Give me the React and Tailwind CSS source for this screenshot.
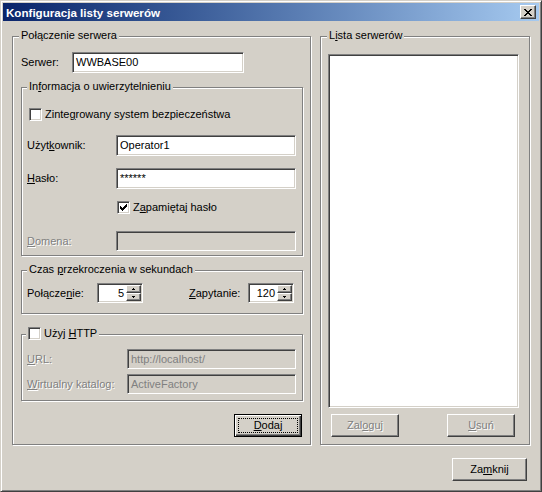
import React from 'react';

const sunken =
  'border border-t-[#808080] border-l-[#808080] border-r-white border-b-white shadow-[inset_1px_1px_0_#404040,inset_-1px_-1px_0_#d4d0c8]';
const raised =
  'border border-t-white border-l-white border-r-[#404040] border-b-[#404040] shadow-[inset_-1px_-1px_0_#808080]';
const etched = 'border border-[#808080] shadow-[inset_1px_1px_0_#fff,1px_1px_0_#fff]';
const disabledText = 'text-[#808080] [text-shadow:1px_1px_0_#fff]';

// underlined access key letter
const U = ({ children }) => <span className="underline underline-offset-1 decoration-1">{children}</span>;

function Group({ title, className, children, legendLeft = 'left-[6px]' }) {
  return (
    <div className={`relative flex flex-col shrink-0 ${etched} ${className}`}>
      <span className={`absolute top-[-8px] ${legendLeft} px-[2px] bg-[#d4d0c8] whitespace-nowrap`}>{title}</span>
      {children}
    </div>
  );
}

function Edit({ className, value, disabled, h = 'h-[21px]' }) {
  return (
    <div
      className={`${sunken} ${h} ${className} shrink-0 flex items-center pl-[3px] whitespace-nowrap overflow-hidden ${
        disabled ? 'bg-[#d4d0c8] text-[#808080]' : 'bg-white'
      }`}
    >
      {value}
    </div>
  );
}

function Check({ checked }) {
  return (
    <span className={`w-[13px] h-[13px] shrink-0 bg-white ${sunken} flex items-center justify-center`}>
      {checked && (
        <svg width="7" height="7" viewBox="0 0 7 7" shapeRendering="crispEdges">
          <path
            fill="#000"
            d="M6 0h1v1h-1z M5 1h2v1h-2z M0 2h1v1h-1z M4 2h3v1h-3z M0 3h2v1h-2z M3 3h3v1h-3z M0 4h5v1h-5z M1 5h3v1h-3z M2 6h1v1h-1z"
          />
        </svg>
      )}
    </span>
  );
}

function Spin({ value }) {
  return (
    <div className={`${sunken} w-[46px] h-[20px] shrink-0 bg-white flex`}>
      <span className="flex-1 flex items-center justify-end pr-[2px]">{value}</span>
      <div className="w-[15px] flex flex-col mt-[1px] mr-[1px] mb-[1px]">
        <span className={`flex-1 bg-[#d4d0c8] ${raised} flex items-center justify-center`}>
          <svg width="3" height="2" viewBox="0 0 3 2" shapeRendering="crispEdges">
            <path fill="#000" d="M1 0h1v1h-1z M0 1h3v1h-3z" />
          </svg>
        </span>
        <span className={`flex-1 bg-[#d4d0c8] ${raised} flex items-center justify-center`}>
          <svg width="3" height="2" viewBox="0 0 3 2" shapeRendering="crispEdges">
            <path fill="#000" d="M0 0h3v1h-3z M1 1h1v1h-1z" />
          </svg>
        </span>
      </div>
    </div>
  );
}

function Button({ className, children, disabled }) {
  return (
    <div
      className={`${raised} bg-[#d4d0c8] h-[23px] shrink-0 flex items-center justify-center ${
        disabled ? disabledText : ''
      } ${className}`}
    >
      {children}
    </div>
  );
}

export default function App() {
  return (
    <div className="w-[542px] h-[492px] bg-[#d4d0c8] font-['Liberation_Sans',Arial,sans-serif] text-[11px] leading-[13px] text-black border border-t-[#d4d0c8] border-l-[#d4d0c8] border-r-[#404040] border-b-[#404040] shadow-[inset_1px_1px_0_#fff,inset_-1px_-1px_0_#808080] p-[2px] flex flex-col select-none">
      {/* title bar */}
      <div className="h-[18px] shrink-0 flex items-center bg-linear-to-r from-[#0a246a] to-[#a6caf0] pl-[3px] pr-[3px]">
        <span className="flex-1 text-white font-bold text-[11.6px]">Konfiguracja listy serwerów</span>
        <div className={`w-[16px] h-[14px] bg-[#d4d0c8] ${raised} flex items-center justify-center`}>
          <svg width="8" height="7" viewBox="0 0 8 7" shapeRendering="crispEdges">
            <path
              fill="#000"
              d="M0 0h2v1h-2z M6 0h2v1h-2z M1 1h2v1h-2z M5 1h2v1h-2z M2 2h4v1h-4z M3 3h2v1h-2z M2 4h4v1h-4z M1 5h2v1h-2z M5 5h2v1h-2z M0 6h2v1h-2z M6 6h2v1h-2z"
            />
          </svg>
        </div>
      </div>

      <div className="flex flex-col pl-[9px]">
        <div className="flex mt-[15px]">
          {/* Połączenie serwera */}
          <Group title="Połączenie serwera" className="w-[299px] h-[409px] pl-[8px] pr-[7px]">
            <div className="flex items-center mt-[15px]">
              <span className="w-[51px]">Serwer:</span>
              <Edit className="w-[172px]" value="WWBASE00" />
            </div>

            <Group
              title={<>In<U>f</U>ormacja o uwierzytelnieniu</>}
              legendLeft="left-[5px]"
              className="w-[282px] h-[169px] mt-[14px]"
            >
              <div className="flex items-center mt-[20px] ml-[7px]">
                <Check />
                <span className="ml-[3px]">
                  Zinte<U>g</U>rowany system bezpieczeństwa
                </span>
              </div>
              <div className="flex items-center mt-[14px] ml-[5px]">
                <span className="w-[89px]">
                  Użyt<U>k</U>ownik:
                </span>
                <Edit className="w-[180px]" value="Operator1" />
              </div>
              <div className="flex items-center mt-[12px] ml-[5px]">
                <span className="w-[89px]">
                  <U>H</U>asło:
                </span>
                <Edit className="w-[180px]" value="******" />
              </div>
              <div className="flex items-center mt-[12px] ml-[95px]">
                <Check checked />
                <span className="ml-[3px]">
                  Z<U>a</U>pamiętaj hasło
                </span>
              </div>
              <div className="flex items-center mt-[17px] ml-[5px]">
                <span className={`w-[89px] ${disabledText}`}>
                  <U>D</U>omena:
                </span>
                <Edit className="w-[180px]" h="h-[20px]" disabled value="" />
              </div>
            </Group>

            <Group
              title={<>Czas <U>p</U>rzekroczenia w sekundach</>}
              legendLeft="left-[5px]"
              className="w-[282px] h-[44px] mt-[14px]"
            >
              <div className="flex items-center mt-[12px] ml-[5px]">
                <span className="w-[70px]">
                  Połącze<U>n</U>ie:
                </span>
                <Spin value="5" />
                <span className="w-[59px] ml-[46px]">
                  <U>Z</U>apytanie:
                </span>
                <Spin value="120" />
              </div>
            </Group>

            <Group
              title={
                <span className="flex items-center gap-[3px]">
                  <Check />
                  <span>
                    Użyj <U>H</U>TTP
                  </span>
                </span>
              }
              legendLeft="left-[4px]"
              className="w-[282px] h-[67px] mt-[20px]"
            >
              <div className="flex items-center mt-[14px] ml-[5px]">
                <span className={`w-[100px] ${disabledText}`}>
                  <U>U</U>RL:
                </span>
                <Edit className="w-[169px]" h="h-[20px]" disabled value="http://localhost/" />
              </div>
              <div className="flex items-center mt-[5px] ml-[5px]">
                <span className={`w-[100px] ${disabledText}`}>
                  <U>W</U>irtualny katalog:
                </span>
                <Edit className="w-[169px]" h="h-[20px]" disabled value="ActiveFactory" />
              </div>
            </Group>

            <div className="self-end mr-[1px] mt-[13px] w-[68px] h-[23px] bg-[#d4d0c8] border border-black shadow-[inset_1px_1px_0_#fff,inset_-1px_-1px_0_#404040,inset_-2px_-2px_0_#808080] p-[3px] flex">
              <span className="flex-1 border border-dotted border-black flex items-center justify-center">
                <U>D</U>odaj
              </span>
            </div>
          </Group>

          {/* Lista serwerów */}
          <Group title={<>L<U>i</U>sta serwerów</>} className="w-[210px] h-[409px] ml-[9px]">
            <div className={`${sunken} bg-white w-[191px] h-[354px] mt-[17px] ml-[7px]`} />
            <div className="flex mt-[6px] ml-[10px]">
              <Button className="w-[68px]" disabled>
                Zal<U>o</U>guj
              </Button>
              <Button className="w-[68px] ml-[48px]" disabled>
                <U>U</U>suń
              </Button>
            </div>
          </Group>
        </div>

        <div className="flex justify-end mt-[13px] pr-[12px]">
          <Button className="w-[75px]">
            Za<U>m</U>knij
          </Button>
        </div>
      </div>
    </div>
  );
}
